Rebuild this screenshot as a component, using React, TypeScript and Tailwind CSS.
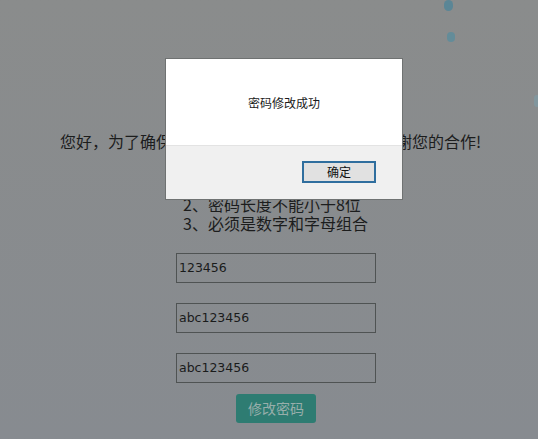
import React from 'react';

const cjk = { fontFamily: '"Noto Sans CJK SC", "Liberation Sans", sans-serif' };

export default function App() {
  return (
    <div
      className="relative w-[538px] h-[439px] overflow-hidden bg-gradient-to-b from-[#8a8c8c] to-[#878b90] text-[#1c1d1d]"
      style={cjk}
    >
      {/* decorative dots */}
      <div className="absolute left-[444px] top-[0px] w-[9px] h-[11px] rounded-full bg-[#4f8598] opacity-80" />
      <div className="absolute left-[447px] top-[32px] w-[8px] h-[10px] rounded-full bg-[#5a8c9c] opacity-80" />
      <div className="absolute left-[534px] top-[95px] w-[6px] h-[12px] rounded-full bg-[#7d9aa4] opacity-70" />

      <div className="flex flex-col items-center pt-[131px]">
        <p className="text-[16px] leading-[20px] whitespace-nowrap ml-[3px]">
          您好，为了确保账户安全，请修改您的密码，谢谢您的合作!
        </p>

        <div className="ml-[14px] w-[200px] flex flex-col">
          <div className="mt-[25px] pl-[7px] text-[16px] leading-[19px] whitespace-nowrap">
            <p>1、新密码不能与原密码相同</p>
            <p>2、密码长度不能小于8位</p>
            <p>3、必须是数字和字母组合</p>
          </div>

          <div className="mt-[20px] flex flex-col gap-[20px]">
            {['123456', 'abc123456', 'abc123456'].map((v, i) => (
              <div
                key={i}
                className="h-[30px] border border-[#4f5353] flex items-center px-[2px] text-[#1a1b1b]"
                style={{ fontFamily: '"DejaVu Sans", "Liberation Sans", sans-serif', fontSize: '12.5px' }}
              >
                {v}
              </div>
            ))}
          </div>

          <div className="mt-[11px] flex justify-center">
            <div className="w-[80px] h-[29px] rounded-[3px] bg-[#2e7c72] text-[#98aeab] text-[14px] flex items-center justify-center">
              修改密码
            </div>
          </div>
        </div>
      </div>

      {/* alert dialog */}
      <div className="absolute left-[165px] top-[58px] w-[238px] h-[142px] bg-white border border-[#6f7272] flex flex-col">
        <div className="h-[86px] flex items-center justify-center text-[12px] text-[#1a1a1a] pt-[1px]">
          密码修改成功
        </div>
        <div className="flex-1 bg-[#f0f0f0] border-t border-[#e3e3e3] flex justify-end items-start pt-[15px] pr-[26px]">
          <div className="w-[74px] h-[22px] border-2 border-[#2f6e9e] bg-[#e1e1e1] flex items-center justify-center text-[12px] text-[#111]">
            确定
          </div>
        </div>
      </div>
    </div>
  );
}
